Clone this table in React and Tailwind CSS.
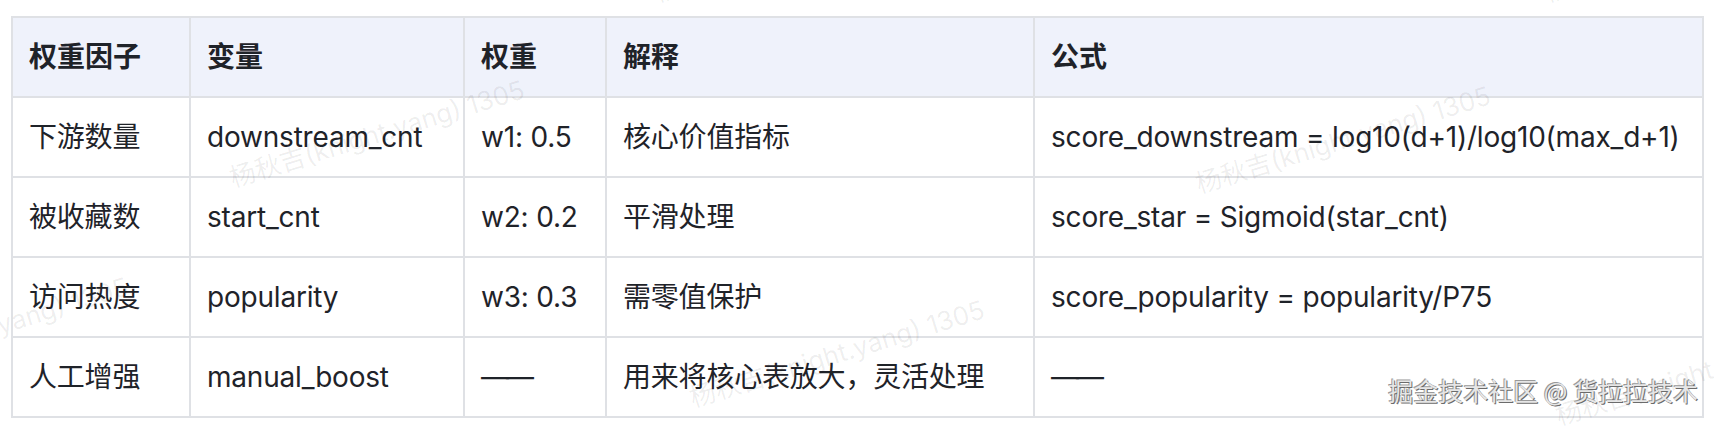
import React from 'react';

const HEAD = ['权重因子', '变量', '权重', '解释', '公式'];

const ROWS = [
  ['下游数量', 'downstream_cnt', 'w1: 0.5', '核心价值指标', 'score_downstream = log10(d+1)/log10(max_d+1)'],
  ['被收藏数', 'start_cnt', 'w2: 0.2', '平滑处理', 'score_star = Sigmoid(star_cnt)'],
  ['访问热度', 'popularity', 'w3: 0.3', '需零值保护', 'score_popularity = popularity/P75'],
  ['人工增强', 'manual_boost', '——', '用来将核心表放大，灵活处理', '——'],
];

const WIDTHS = ['w-[178px]', 'w-[274px]', 'w-[142px]', 'w-[428px]', 'w-[669px]'];

// faint tiled watermark, placed by hand
const MARKS = [
  { left: 'left-[236px]', top: 'top-[158px]' },
  { left: 'left-[1202px]', top: 'top-[164px]' },
  { left: 'left-[-160px]', top: 'top-[355px]' },
  { left: 'left-[696px]', top: 'top-[378px]' },
  { left: 'left-[1562px]', top: 'top-[396px]' },
  { left: 'left-[660px]', top: 'top-[-27px]' },
  { left: 'left-[1550px]', top: 'top-[-27px]' },
];

export default function App() {
  return (
    <div className="relative h-[428px] w-[1714px] overflow-hidden bg-white font-['Inter','Noto_Sans_CJK_SC',sans-serif] text-[#1f2329]">
      <div className="pl-[11px] pt-[16px]">
        <table className="w-[1691px] table-fixed border-collapse text-[28px]">
          <colgroup>
            {WIDTHS.map((w) => (
              <col key={w} className={w} />
            ))}
          </colgroup>
          <thead>
            <tr className="h-[80px] bg-[#eff2fb]">
              {HEAD.map((h) => (
                <th key={h} className="border-2 border-[#dfe1e5] px-4 text-left font-semibold">
                  {h}
                </th>
              ))}
            </tr>
          </thead>
          <tbody>
            {ROWS.map((row) => (
              <tr key={row[0]} className="h-[80px]">
                {row.map((cell, i) => (
                  <td
                    key={i}
                    className={
                      cell === '——'
                        ? 'whitespace-nowrap border-2 border-[#dfe1e5] px-4 tracking-[-3px]'
                        : 'whitespace-nowrap border-2 border-[#dfe1e5] px-4 tracking-[-0.2px]'
                    }
                  >
                    {cell}
                  </td>
                ))}
              </tr>
            ))}
          </tbody>
        </table>
      </div>

      {MARKS.map((m, i) => (
        <div
          key={i}
          className={`pointer-events-none absolute ${m.left} ${m.top} origin-bottom-left -rotate-[17deg] whitespace-nowrap text-[26px] text-black/[0.07]`}
        >
          杨秋吉(knight.yang) 1305
        </div>
      ))}

      <div className="pointer-events-none absolute right-[16px] top-[378px] whitespace-nowrap font-['Noto_Sans_CJK_SC',sans-serif] text-[25px] leading-none text-[#e6e6e6] [text-shadow:1px_1px_0_#6b6b6b,-1px_-1px_0_#9a9a9a]">
        掘金技术社区 @ 货拉拉技术
      </div>
    </div>
  );
}
